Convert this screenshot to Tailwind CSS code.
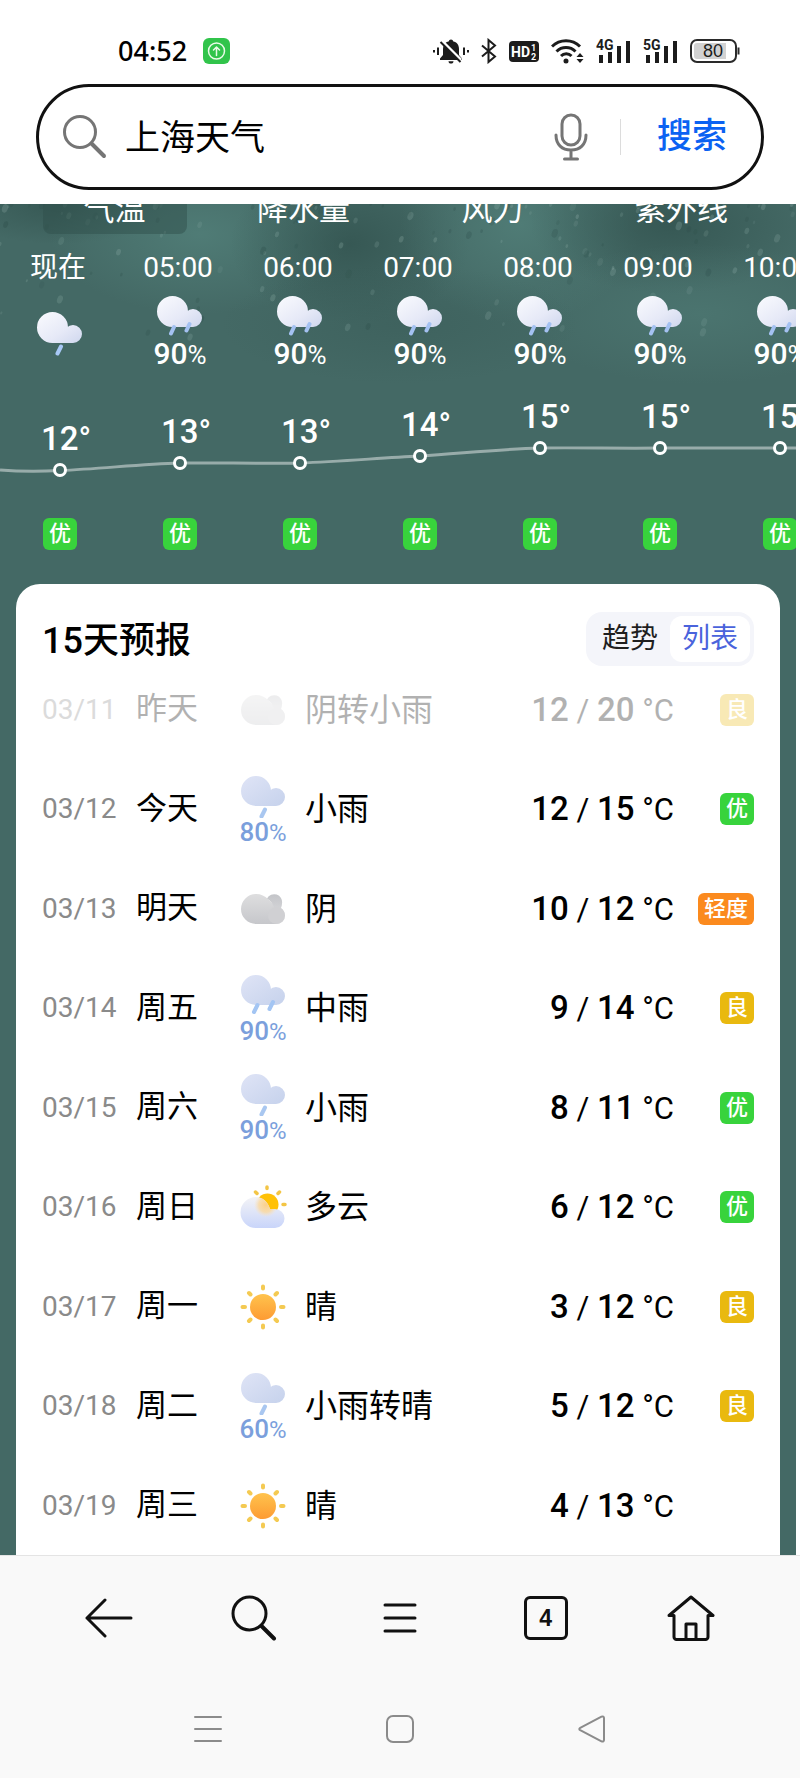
<!DOCTYPE html>
<html lang="zh-CN">

<head>
  <meta charset="UTF-8">
  <meta name="viewport" content="width=device-width, initial-scale=1">
  <title>上海天气</title>
  <script src="https://cdn.jsdelivr.net/npm/@tailwindcss/browser@4"></script>
</head>

<body class="bg-white text-black font-[Roboto,'Noto_Sans_CJK_SC',sans-serif]">

  <!-- 图标定义 -->
  <svg class="absolute h-0 w-0" aria-hidden="true">
    <defs>
      <linearGradient id="cloudWhite" x1="0" y1="0" x2="1" y2="1">
        <stop offset="0" stop-color="#fafbfe" />
        <stop offset=".6" stop-color="#e6e9f7" />
        <stop offset="1" stop-color="#cfd7ee" />
      </linearGradient>
      <linearGradient id="cloudBlue" x1="0" y1="0" x2="1" y2="1">
        <stop offset="0" stop-color="#dfe4f6" />
        <stop offset="1" stop-color="#c6d2ec" />
      </linearGradient>
      <linearGradient id="cloudGray" x1="0" y1="0" x2="0" y2="1">
        <stop offset="0" stop-color="#dededf" />
        <stop offset="1" stop-color="#c6c7cb" />
      </linearGradient>
      <linearGradient id="cloudBack" x1="0" y1="0" x2="0" y2="1">
        <stop offset="0" stop-color="#c3c4c8" />
        <stop offset="1" stop-color="#e2e2e4" />
      </linearGradient>
      <linearGradient id="cloudSoft" x1="0" y1="0" x2="0" y2="1">
        <stop offset="0" stop-color="#f3f3f6" />
        <stop offset="1" stop-color="#c9d5fa" />
      </linearGradient>
      <linearGradient id="sunFill" x1="0" y1="0" x2="0" y2="1">
        <stop offset="0" stop-color="#ffc34d" />
        <stop offset="1" stop-color="#fd9b33" />
      </linearGradient>
      <radialGradient id="sunGlow">
        <stop offset="0" stop-color="#fbd08a" />
        <stop offset=".6" stop-color="#fbd99f" stop-opacity=".8" />
        <stop offset="1" stop-color="#fbe3bd" stop-opacity="0" />
      </radialGradient>
      <clipPath id="softClip">
        <path d="M17 12c7 0 12 5 14 12h5a9.500 9.500 0 0 1 0 19H17a15.500 15.500 0 0 1 0-31z" />
      </clipPath>
    </defs>
    <symbol id="lightRainNight" viewBox="0 0 46 44">
      <path d="M0 15.500a15.500 15.500 0 1 1 31 0a15.500 15.500 0 1 1-31 0zM27 22a9 9 0 1 1 18 0a9 9 0 1 1-18 0zM15 20h21v11H15z" fill="url(#cloudWhite)" />
      <path d="M24 34.500l-3.500 7" stroke="#a8c8f6" stroke-width="4" stroke-linecap="round" />
    </symbol>
    <symbol id="rainNight" viewBox="0 0 46 40">
      <path d="M0 15.500a15.500 15.500 0 1 1 31 0a15.500 15.500 0 1 1-31 0zM27 22a9 9 0 1 1 18 0a9 9 0 1 1-18 0zM15 20h21v11H15z" fill="url(#cloudWhite)" />
      <path d="M17 31l-3 6.500M32.500 28l-3 6.500" stroke="#a4c1f2" stroke-width="4" stroke-linecap="round" />
    </symbol>
    <symbol id="lightRain" viewBox="0 0 46 42">
      <path d="M1 15a15 15 0 1 1 30 0a15 15 0 1 1-30 0zM27 21a9 9 0 1 1 18 0a9 9 0 1 1-18 0zM16 19h20v11H16z" fill="url(#cloudBlue)" />
      <path d="M25 33.500l-3.500 7" stroke="#a9c7f0" stroke-width="4" stroke-linecap="round" />
    </symbol>
    <symbol id="rain" viewBox="0 0 46 42">
      <path d="M1 15a15 15 0 1 1 30 0a15 15 0 1 1-30 0zM27 21a9 9 0 1 1 18 0a9 9 0 1 1-18 0zM16 19h20v11H16z" fill="url(#cloudBlue)" />
      <path d="M17.500 30l-3.500 7M33 27l-3.500 7" stroke="#a3c5f3" stroke-width="4" stroke-linecap="round" />
    </symbol>
    <symbol id="overcast" viewBox="0 0 46 32">
      <path d="M16 1c5 0 9 2 12 5l9 8.500a8.500 8.500 0 0 1-1 16.500H16a15 15 0 0 1 0-30z" fill="url(#cloudGray)" />
      <path d="M27 5.500a8 8 0 0 1 15 5c0 2-.5 3-1 4.500 2.500 1.500 4 4.500 4 7.500a8.500 8.500 0 0 1-9 8.500l-2-16.500c-1-4-3.500-7-7-9z" fill="url(#cloudBack)" />
      <circle cx="36.500" cy="22.500" r="8.500" fill="#d0d0d3" />
    </symbol>
    <symbol id="cloudy" viewBox="0 0 48 44">
      <path d="M28 2v1.500M16.500 7l1.500 1.500M40.500 7L39 8.500M46 19.500h-2" stroke="#f3c545" stroke-width="3.500" stroke-linecap="round" />
      <circle cx="28.500" cy="19.500" r="11" fill="#ffc107" />
      <path d="M17 12c7 0 12 5 14 12h5a9.500 9.500 0 0 1 0 19H17a15.500 15.500 0 0 1 0-31z" fill="url(#cloudSoft)" />
      <circle cx="27" cy="20" r="12" fill="url(#sunGlow)" clip-path="url(#softClip)" />
    </symbol>
    <symbol id="sunny" viewBox="0 0 46 46">
      <path d="M23 2.500v2M23 41.500v2M2.500 23h2.500M41 23h2.500M9 9l1.500 1.500M35.500 35.500L37 37M37 9l-1.500 1.500M10.500 35.500L9 37" stroke="#f4ca52" stroke-width="4" stroke-linecap="round" />
      <circle cx="23" cy="23" r="13" fill="url(#sunFill)" />
    </symbol>
  </svg>

  <!-- 状态栏 -->
  <header>
    <div class="flex h-21 items-center justify-between pt-4.5 pr-15 pl-29.5">
      <div class="flex items-center gap-4">
        <span class="text-[27px] font-medium font-['Noto_Sans',sans-serif]">04:52</span>
        <svg width="27" height="26" viewBox="0 0 27 26" fill="none" stroke="#eafbe9" stroke-width="1.500" stroke-linecap="round" stroke-linejoin="round">
          <rect width="27" height="26" rx="6" fill="#31c44b" stroke="none" />
          <circle cx="13.500" cy="13" r="8" />
          <path d="M13.500 17.500V9M10.500 12l3-3 3 3" />
        </svg>
      </div>
      <div class="flex items-center gap-3">
        <svg width="36" height="26" viewBox="0 0 36 26" fill="none" stroke="#1c1c1c" stroke-width="2">
          <path d="M18 1.500c-1.300 0-2 .8-2 1.800-4 .9-6 3.700-6 8.200v5.500L7 20.500V22h22v-1.500L26 17v-5.500c0-4.500-2-7.300-6-8.200 0-1-.7-1.800-2-1.800zM15.500 23.200h5c0 1.500-1 2.300-2.500 2.300s-2.500-.8-2.500-2.300z" fill="#1c1c1c" stroke="none" />
          <path d="M9 3l19 19" stroke="#fff" stroke-width="3" />
          <path d="M7.500 4l20 20" stroke-width="2" />
          <path d="M1 12v2.500M5 9.500v7.500M31 9.500v7.500M35 12v2.500" />
        </svg>
        <svg width="16" height="26" viewBox="0 0 16 26" fill="none" stroke="#1c1c1c" stroke-width="2">
          <path d="M1 7.500l13 11-6.500 5.500V2L14 7.500l-13 11" />
        </svg>
        <svg width="30" height="24" viewBox="0 0 30 24" fill="#fff" font-family="Roboto, sans-serif" font-weight="700">
          <rect y="2" width="30" height="21" rx="4" fill="#1c1c1c" />
          <text x="2" y="18" font-size="14">HD</text>
          <text x="22" y="12" font-size="9">1</text>
          <text x="22" y="20.500" font-size="9">2</text>
        </svg>
        <svg width="33" height="26" viewBox="0 0 33 26" fill="none" stroke="#1c1c1c" stroke-width="3">
          <path d="M1 8.500a20 20 0 0 1 28 0M5.500 13.500a13.500 13.500 0 0 1 19 0M10 18a7.500 7.500 0 0 1 10.500 0" />
          <path d="M15 25.500a2.500 2.500 0 1 1 0-5 2.500 2.500 0 0 1 0 5zM29 15l3.500 4h-7zM29 25l3.500-4h-7z" fill="#1c1c1c" stroke="none" />
        </svg>
        <svg width="35" height="26" viewBox="0 0 35 26" fill="#1c1c1c">
          <text x="0" y="12" font-size="14" font-weight="700" font-family="Roboto, sans-serif">4G</text>
          <path d="M3 17h4v8H3zM12 14h4v11h-4zM21 8h4v17h-4zM30 3h4v22h-4z" />
        </svg>
        <svg width="35" height="26" viewBox="0 0 35 26" fill="#1c1c1c">
          <text x="0" y="12" font-size="14" font-weight="700" font-family="Roboto, sans-serif">5G</text>
          <path d="M3 17h4v8H3zM12 14h4v11h-4zM21 8h4v17h-4zM30 3h4v22h-4z" />
        </svg>
        <svg width="50" height="24" viewBox="0 0 50 24" fill="none">
          <rect x="1" y="1" width="45" height="22" rx="6" stroke="#2a2a2a" stroke-width="2" />
          <path d="M7 4h29v16H7a3 3 0 0 1-3-3V7a3 3 0 0 1 3-3z" fill="#d2d2d2" />
          <path d="M48.500 8.500v7" stroke="#2a2a2a" stroke-width="2" />
          <text x="23" y="18" font-size="18" text-anchor="middle" fill="#1c1c1c" font-family="'Liberation Sans', sans-serif">80</text>
        </svg>
      </div>
    </div>

    <!-- 搜索框 -->
    <form class="mx-9 flex h-26.5 items-center rounded-full border-3 border-[#111] pr-8.5 pl-6">
      <svg class="shrink-0" width="44" height="46" viewBox="0 0 44 46" fill="none" stroke="#757575" stroke-width="3" stroke-linecap="round">
        <circle cx="17" cy="18" r="15.500" />
        <path d="M28.500 29.500L41 42" stroke-width="4" />
      </svg>
      <input type="text" value="上海天气" aria-label="搜索" class="ml-4.5 min-w-0 flex-1 pt-1 text-[35px] leading-10 outline-none">
      <button type="button" aria-label="语音输入">
        <svg width="34" height="48" viewBox="0 0 34 48" fill="none" stroke="#757575" stroke-width="3" stroke-linecap="round">
          <rect x="8" y="2" width="18" height="30" rx="9" />
          <path d="M2 22c0 9.500 6 15 15 15s15-5.500 15-15M17 37v9M10.500 46h13" />
        </svg>
      </button>
      <span class="mr-9 ml-8 h-9 w-px bg-[#dcdcdc]"></span>
      <button type="submit" class="text-[35px] leading-10 font-medium text-[#0b62f2]">搜索</button>
    </form>
  </header>

  <main class="mt-3.5 mr-1 bg-[#446965]">

    <!-- 逐小时天气 -->
    <section class="relative overflow-hidden text-white">
      <svg id="rainGlass" class="absolute top-0 left-0 h-52 w-full" viewBox="0 0 796 208" preserveAspectRatio="none" aria-hidden="true">
        <defs>
          <radialGradient id="dark">
            <stop offset="0" stop-color="#2f4f4b" stop-opacity=".65" />
            <stop offset="1" stop-color="#2f4f4b" stop-opacity="0" />
          </radialGradient>
          <radialGradient id="light">
            <stop offset="0" stop-color="#578881" stop-opacity=".6" />
            <stop offset="1" stop-color="#578881" stop-opacity="0" />
          </radialGradient>
        </defs>
        <ellipse cx="60" cy="0" rx="110" ry="40" fill="url(#dark)" />
        <ellipse cx="200" cy="30" rx="150" ry="80" fill="url(#light)" />
        <ellipse cx="350" cy="40" rx="120" ry="80" fill="url(#dark)" />
        <ellipse cx="520" cy="20" rx="120" ry="100" fill="url(#light)" />
        <ellipse cx="670" cy="20" rx="140" ry="70" fill="url(#dark)" />
        <ellipse cx="700" cy="110" rx="180" ry="70" fill="url(#light)" opacity=".6" />
        <ellipse cx="400" cy="120" rx="180" ry="60" fill="url(#dark)" opacity=".4" />
      </svg>

      <div class="relative mx-5 -mt-5.5 grid grid-cols-4 text-[31px] leading-12">
        <button class="mx-auto w-36 rounded-lg bg-[#2f4f4b]/50 pt-1">气温</button>
        <button class="pt-1">降水量</button>
        <button class="pt-1">风力</button>
        <button class="pt-1">紫外线</button>
      </div>

      <ul id="hours" class="relative mt-3.5 flex"></ul>

      <!-- 温度曲线 -->
      <svg id="tempChart" class="relative block" width="840" height="120" viewBox="0 0 840 120" fill="none">
        <path d="M0 90C20 91.500 40 91.500 60 90.500C100 89 140 84 180 83C220 82.500 260 84 300 83C340 81.500 380 78 420 76C460 73.500 500 69 540 68C580 67.500 620 68.500 660 68H840" stroke="#fff" stroke-opacity=".45" stroke-width="3" />
      </svg>

      <ul id="airQuality" class="relative mt-4.5 flex pb-8.5"></ul>
    </section>

    <!-- 15天预报 -->
    <section class="mx-4 rounded-t-3xl bg-white px-6.5 pt-7">
      <div class="flex items-center justify-between">
        <h2 class="pt-1 text-[36px] leading-12 font-medium">15天预报</h2>
        <div class="flex rounded-2xl bg-[#f4f5fa] p-1 text-[28px]">
          <button class="px-3 leading-11.5 text-[#1f1f1f]">趋势</button>
          <button class="rounded-xl bg-white px-3 leading-11.5 text-[#4a63dc]">列表</button>
        </div>
      </div>
      <table class="-mt-1.5 w-full">
        <tbody id="days"></tbody>
      </table>
    </section>
  </main>

  <footer class="border-t border-[#e4e4e4] bg-[#f9f9f9]">
    <!-- 浏览器工具栏 -->
    <nav class="grid h-31 grid-cols-5 place-items-center px-9">
      <button aria-label="返回">
        <svg width="48" height="40" viewBox="0 0 48 40" fill="none" stroke="#111" stroke-width="3" stroke-linecap="round" stroke-linejoin="round">
          <path d="M46 20H2M20 2L2 20l18 18" />
        </svg>
      </button>
      <button aria-label="搜索">
        <svg width="46" height="46" viewBox="0 0 46 46" fill="none" stroke="#111" stroke-width="3" stroke-linecap="round">
          <circle cx="18.500" cy="18.500" r="16.500" />
          <path d="M30.500 31L43 43.500" stroke-width="4" />
        </svg>
      </button>
      <button aria-label="菜单">
        <svg width="34" height="32" viewBox="0 0 34 32" fill="none" stroke="#111" stroke-width="3" stroke-linecap="round">
          <path d="M2 3h30M2 16h30M2 29h30" />
        </svg>
      </button>
      <button aria-label="标签页" class="h-11 w-11 rounded-md border-3 border-[#111] font-['Liberation_Sans',sans-serif] text-[23px] leading-9 font-bold text-[#111]">4</button>
      <button aria-label="主页">
        <svg width="48" height="46" viewBox="0 0 48 46" fill="none" stroke="#111" stroke-width="3" stroke-linecap="round" stroke-linejoin="round">
          <path d="M7 20.500H2L24 2l22 18.500h-5V42a2.500 2.500 0 0 1-2.500 2.500h-29A2.500 2.500 0 0 1 7 42zM19 44V29h10v15" />
        </svg>
      </button>
    </nav>

    <!-- 系统导航 -->
    <nav class="grid h-24.5 grid-cols-3 place-items-center px-28">
      <button aria-label="最近任务">
        <svg width="28" height="28" viewBox="0 0 28 28" stroke="#8b8b8b" stroke-width="2" stroke-linecap="round">
          <path d="M1 2h26M1 14h26M1 26h26" />
        </svg>
      </button>
      <button aria-label="主屏幕">
        <svg width="28" height="28" viewBox="0 0 28 28" fill="none" stroke="#8b8b8b" stroke-width="2">
          <rect x="1" y="1" width="26" height="26" rx="6" />
        </svg>
      </button>
      <button aria-label="返回上一级">
        <svg width="28" height="28" viewBox="0 0 28 28" fill="none" stroke="#8b8b8b" stroke-width="2" stroke-linejoin="round">
          <path d="M2.200 12.800L23.500 1.700c1.500-.7 2.500 0 2.500 1.300v22c0 1.300-1 2-2.500 1.300L2.200 15.200c-1.200-.7-1.200-1.700 0-2.400z" />
        </svg>
      </button>
    </nav>
  </footer>

  <script>
    const hours = [
      { time: '现在', icon: 'lightRainNight', rain: null, temp: 12, y: 90 },
      { time: '05:00', icon: 'rainNight', rain: 90, temp: 13, y: 83 },
      { time: '06:00', icon: 'rainNight', rain: 90, temp: 13, y: 83 },
      { time: '07:00', icon: 'rainNight', rain: 90, temp: 14, y: 76 },
      { time: '08:00', icon: 'rainNight', rain: 90, temp: 15, y: 68 },
      { time: '09:00', icon: 'rainNight', rain: 90, temp: 15, y: 68 },
      { time: '10:00', icon: 'rainNight', rain: 90, temp: 15, y: 68 },
    ];

    const days = [
      ['03/11', '昨天', 'overcast', null, '阴转小雨', 12, 20, '良'],
      ['03/12', '今天', 'lightRain', 80, '小雨', 12, 15, '优'],
      ['03/13', '明天', 'overcast', null, '阴', 10, 12, '轻度'],
      ['03/14', '周五', 'rain', 90, '中雨', 9, 14, '良'],
      ['03/15', '周六', 'lightRain', 90, '小雨', 8, 11, '优'],
      ['03/16', '周日', 'cloudy', null, '多云', 6, 12, '优'],
      ['03/17', '周一', 'sunny', null, '晴', 3, 12, '良'],
      ['03/18', '周二', 'lightRain', 60, '小雨转晴', 5, 12, '良'],
      ['03/19', '周三', 'sunny', null, '晴', 4, 13, ''],
    ];

    // 图标尺寸 [宽, 高]
    const iconSize = {
      lightRainNight: [46, 44],
      rainNight: [46, 40],
      lightRain: [46, 42],
      rain: [46, 42],
      overcast: [46, 32],
      cloudy: [48, 44],
      sunny: [46, 46],
    };

    const badgeColor = {
      '优': 'bg-[#38d33c]',
      '良': 'bg-[#e9b90f]',
      '轻度': 'bg-[#fb8a1e]',
    };

    const icon = (name) => `<svg class="mx-auto shrink-0" width="${iconSize[name][0]}" height="${iconSize[name][1]}" aria-hidden="true"><use href="#${name}" /></svg>`;

    const badge = (level) => `<span class="inline-block rounded-md px-1.5 align-middle text-[22px] leading-8 font-medium text-white ${badgeColor[level]}">${level}</span>`;

    // 逐小时
    document.getElementById('hours').innerHTML = hours.map((h) => `
      <li class="w-30 shrink-0 text-center">
        <div class="pr-1 text-[28px] leading-10">${h.time}</div>
        <div class="flex h-23 flex-col justify-center">
          ${icon(h.icon)}
          ${h.rain ? `<div class="text-[30px] leading-9 font-medium">${h.rain}<span class="text-[26px] font-normal">%</span></div>` : ''}
        </div>
      </li>`).join('');

    document.getElementById('airQuality').innerHTML = hours.map(() => `
      <li class="w-30 shrink-0 text-center">${badge('优')}</li>`).join('');

    // 曲线上的温度与节点
    document.getElementById('tempChart').innerHTML += hours.map((h, i) => `
      <text x="${i * 120 + 66}" y="${h.y - 20}" text-anchor="middle" fill="#fff" font-size="33" font-weight="500" font-family="Roboto, sans-serif">${h.temp}°</text>
      <circle cx="${i * 120 + 60}" cy="${h.y}" r="5.5" fill="#446965" stroke="#fff" stroke-width="3" />`).join('');

    // 每日列表
    document.getElementById('days').innerHTML = days.map(([date, week, name, rain, text, low, high, air], i) => `
      <tr class="odd:h-[99px] even:h-[100px] ${i === 0 ? 'opacity-30' : ''}">
        <td class="w-[94px] p-0 text-[28px] text-[#8a8a8a]">${date}</td>
        <td class="w-[85px] p-0 text-[31px]">${week}</td>
        <td class="w-[84px] p-0 text-center">
          ${rain ? `<div class="pt-1">${icon(name)}<div class="text-[26px] leading-7 font-medium text-[#7b9fdc]">${rain}<span class="text-[24px] font-normal">%</span></div></div>` : icon(name)}
        </td>
        <td class="p-0 text-[32px]">${text}</td>
        <td class="p-0 text-right text-[31px] whitespace-nowrap"><span class="text-[33px] font-medium">${low}</span> / <span class="text-[33px] font-medium">${high}</span> °C</td>
        <td class="w-20 p-0 text-right whitespace-nowrap">${air ? badge(air) : ''}</td>
      </tr>`).join('');

    // 玻璃上的雨滴
    let seed = 7;
    const rand = () => (seed = (seed * 16807) % 2147483647) / 2147483647;
    let drops = '';
    for (let i = 0; i < 150; i++) {
      const x = rand() * 796;
      const y = rand() * rand() * 150;
      const r = 1 + rand() * 2;
      drops += `<ellipse cx="${x}" cy="${y}" rx="${r}" ry="${r * 1.5}" transform="rotate(20 ${x} ${y})" fill="${rand() > 0.5 ? '#9fbdb6' : '#24423f'}" fill-opacity="${0.1 + rand() * 0.15}" />`;
    }
    document.getElementById('rainGlass').innerHTML += drops;
  </script>

</body>

</html>
